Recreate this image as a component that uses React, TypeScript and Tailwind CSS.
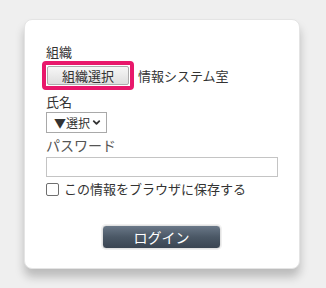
import { ChevronDown } from 'lucide-react';

export default function App() {
  return (
    <div
      className="w-[326px] h-[288px] bg-[#efefef] pt-[19px] pl-[24px] text-[13px] text-[#333]"
      style={{ fontFamily: '"Noto Sans CJK JP", "Noto Sans", sans-serif' }}
    >
      <div className="w-[276px] h-[250px] bg-white rounded-[8px] border border-[#e4e4e4] shadow-[0_8px_10px_rgba(0,0,0,0.22)] pl-[21px] pr-[21px] pt-[22px]">
        <div className="h-[19px] leading-[19px]">組織</div>
        <div className="flex items-center h-[29px]">
          <div className="ml-[-4px] border-[4px] border-[#e8186b] rounded-[4px] p-[1px]">
            <div className="w-[82px] h-[19px] leading-[18px] text-center border border-[#adadad] bg-gradient-to-b from-[#f7f7f7] to-[#dedede] rounded-[2px]">
              組織選択
            </div>
          </div>
          <span className="ml-[4px]">情報システム室</span>
        </div>
        <div className="h-[21px] leading-[21px] mt-[1px]">氏名</div>
        <div className="w-[61px] h-[21px] border border-[#a9a9a9] flex items-center pl-[7px] gap-[1px] whitespace-nowrap">
          <span className="leading-none text-[12px]">▼選択</span>
          <ChevronDown className="w-[11px] h-[11px] flex-none" strokeWidth={4} />
        </div>
        <div className="h-[24px] leading-[24px] text-[14px] text-[#555]">パスワード</div>
        <div className="w-[232px] h-[20px] border border-[#c4c4c4]"></div>
        <div className="flex items-center h-[20px] mt-[2px]">
          <div className="w-[13px] h-[13px] border border-[#6f6f6f] rounded-[2px] bg-white"></div>
          <span className="ml-[5px]">この情報をブラウザに保存する</span>
        </div>
        <div className="flex justify-center mt-[26px] ml-[-21px] mr-[-21px] pr-[1px]">
          <div className="w-[119px] h-[24px] rounded-[4px] border border-[#e2e2e2] shadow-[0_0_0_1px_#f0f0f0] bg-gradient-to-b from-[#6a7888] via-[#4b5866] to-[#3a4552] text-white text-[14px] leading-[22px] text-center">
            ログイン
          </div>
        </div>
      </div>
    </div>
  );
}
